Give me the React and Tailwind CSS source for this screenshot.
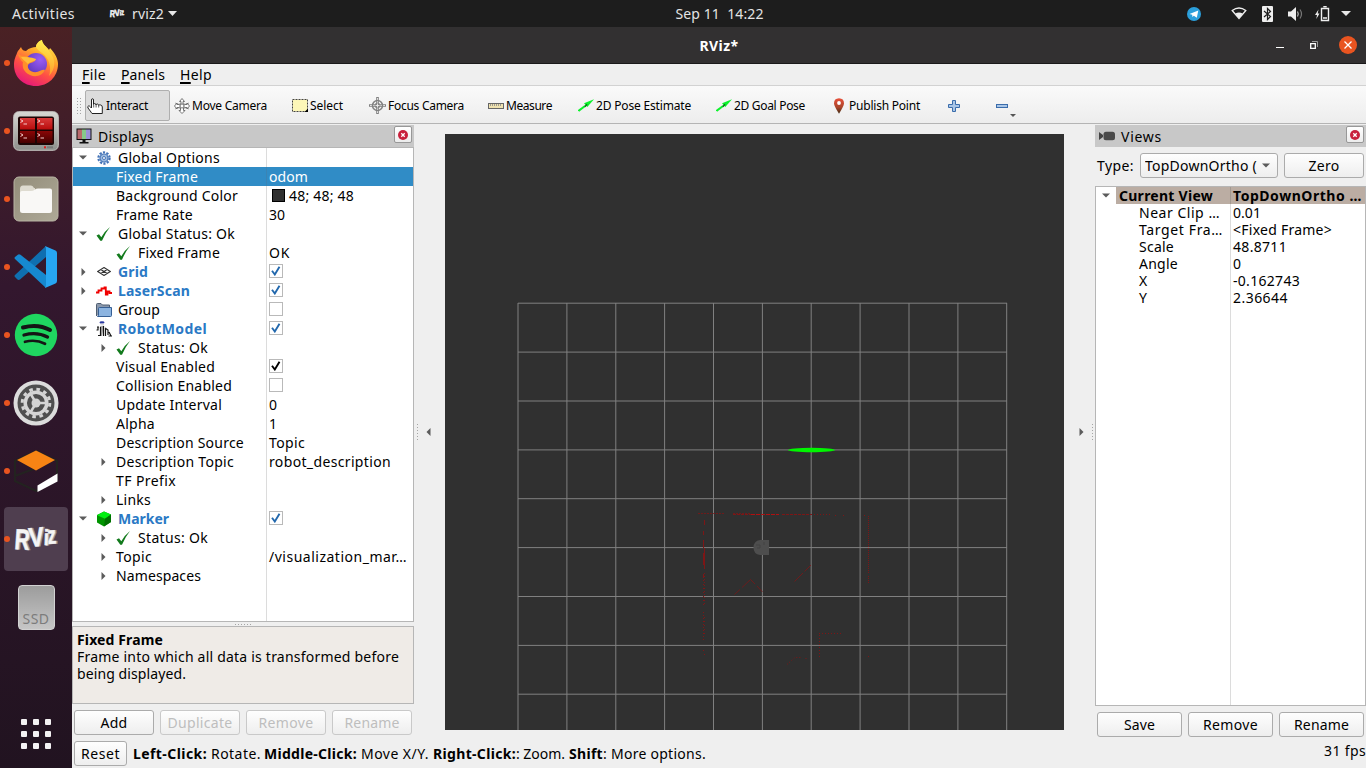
import React, { useLayoutEffect, useRef } from "react";

/* Text run spread by letter spacing over a fixed width. */
function Label({ w, className = "", children }) {
  const ref = useRef(null);
  useLayoutEffect(() => {
    const el = ref.current;
    el.style.letterSpacing = "0px";
    el.style.width = "auto";
    const natural = el.getBoundingClientRect().width;
    const n = el.textContent.length;
    el.style.letterSpacing = `${(w - natural) / n}px`;
    el.style.width = `${w}px`;
  }, [w, children]);
  return (
    <span ref={ref} className={"inline-block shrink-0 whitespace-pre " + className}>
      {children}
    </span>
  );
}

/* ---------- dock icons ---------- */
const Firefox = () => (
  <svg width="46" height="48" viewBox="0 0 46 48">
    <defs>
      <linearGradient id="ffa" x1="0.8" y1="0" x2="0.3" y2="1">
        <stop offset="0" stopColor="#fff44f" />
        <stop offset="0.35" stopColor="#ffa52a" />
        <stop offset="0.65" stopColor="#ff4f45" />
        <stop offset="1" stopColor="#e5177b" />
      </linearGradient>
      <linearGradient id="ffb" x1="0.5" y1="0" x2="0.4" y2="1">
        <stop offset="0" stopColor="#fff150" />
        <stop offset="1" stopColor="#ff9a2a" />
      </linearGradient>
      <radialGradient id="ffc" cx="0.7" cy="0.3" r="0.8">
        <stop offset="0" stopColor="#9a5cf5" />
        <stop offset="1" stopColor="#5a35b8" />
      </radialGradient>
    </defs>
    <path d="M8 8 C9 11 11 12 13 12 C16 9 20 8 23 8 C23 5 26 2 29 1 C29 5 34 8 36 11 C36 10 37 10 37 9 C42 14 45 20 45 25 C45 38 35 47 23 47 C10 47 1 38 1 26 C1 20 3 17 4 14 C5 11 7 10 8 8Z" fill="url(#ffa)" />
    <path d="M23 8 C23 5 26 2 29 1 C29 5 34 8 36 12 C44 21 42 31 36 37 C39 28 36 19 29 14 C26 12 24 10 23 8Z" fill="url(#ffb)" />
    <circle cx="23" cy="25" r="11" fill="url(#ffc)" />
    <path d="M5 15 C8 17 11 17 13 17 C15 18 19 21 23 20 C22 24 17 23 15 26 C14 30 18 34 24 33 C28 32 29 30 32 31 C30 36 23 39 17 36 C10 33 9 27 10 23 C8 22 6 18 5 15Z" fill="#ff8f2b" />
    <path d="M8 18 C12 18 18 18 23 20 C22 23 17 22 15 25 C12 22 10 21 8 18Z" fill="#ffbd3a" />
  </svg>
);

const Terminator = () => (
  <svg width="46" height="40" viewBox="0 0 46 40">
    <defs>
      <linearGradient id="tma" x1="0" y1="0" x2="0" y2="1">
        <stop offset="0" stopColor="#d8d8d4" />
        <stop offset="1" stopColor="#8d8f8b" />
      </linearGradient>
      <linearGradient id="tmb" x1="0" y1="0" x2="0" y2="1">
        <stop offset="0" stopColor="#d83a3a" />
        <stop offset="1" stopColor="#b80c0c" />
      </linearGradient>
      <linearGradient id="tmc" x1="0" y1="0" x2="0" y2="1">
        <stop offset="0" stopColor="#8a0606" />
        <stop offset="1" stopColor="#460000" />
      </linearGradient>
    </defs>
    <rect x="0.7" y="0.7" width="44.6" height="38.6" rx="5" fill="url(#tma)" stroke="#c6c6c2" />
    <rect x="5" y="5.500" width="36" height="28.500" rx="2" fill="#1d0505" />
    <rect x="7" y="7" width="15" height="11.500" fill="url(#tmb)" />
    <rect x="24" y="7" width="15.500" height="11.500" fill="url(#tmb)" />
    <rect x="7" y="20" width="15" height="12" fill="url(#tmc)" />
    <rect x="24" y="20" width="15.500" height="12" fill="url(#tmc)" />
    <g fill="none" stroke="#f4caca" strokeWidth="1">
      <path d="M7.500 8.500l2.500 1.500l-2.500 1.500M10.500 13h3.500M24.500 8.500l2.500 1.500l-2.500 1.500M27.500 13h3.500M7.500 22.500l2.500 1.500l-2.500 1.500M10.500 27h3.500M24.500 22.500l2.500 1.500l-2.500 1.500M27.500 27h3.500" />
    </g>
    <rect x="31" y="35.300" width="2" height="2" fill="#e01b1b" />
    <rect x="34" y="35.300" width="6" height="2" fill="#777" />
  </svg>
);

const Files = () => (
  <svg width="46" height="46" viewBox="0 0 46 46">
    <defs>
      <linearGradient id="fla" x1="0" y1="0" x2="1" y2="1">
        <stop offset="0" stopColor="#938d7a" />
        <stop offset="1" stopColor="#aea997" />
      </linearGradient>
    </defs>
    <rect x="1" y="1" width="44" height="44" rx="5" fill="url(#fla)" stroke="#b9b4a4" />
    <path d="M7 13 q0 -3.500 3 -3.500 h8 q2 0 3 2.500 h1 v6 h-15z" fill="#dedbd0" />
    <path d="M7 17 q0 -2 2 -2 h9 q2 0 4 -1.500 q1 -1 3 -1 h12 q2 0 2 2 v20 q0 2.500 -2.500 2.500 h-27 q-2.500 0 -2.500 -2.500z" fill="#f9f8f6" />
  </svg>
);

const VSCode = () => (
  <svg width="44" height="44" viewBox="0 0 44 44">
    <path d="M1 30 L32 1 V12 L6 34.500 Q4.500 35.500 3.200 34.300 L1 32 Q0 31 1 30Z" fill="#0f6fb0" />
    <path d="M1 14 Q0 13 1 12 L3.800 9.700 Q5 8.800 6.500 9.800 L32 30 V43Z" fill="#1689d0" />
    <path d="M31 1 L41.500 5.500 Q43 6.200 43 8 V36 Q43 37.800 41.500 38.500 L31 43 Q32 42 32 40 V4 Q32 2 31 1Z" fill="#27a6f2" />
  </svg>
);

const Spotify = () => (
  <svg width="44" height="44" viewBox="0 0 44 44">
    <circle cx="22" cy="22" r="21.200" fill="#1fd660" />
    <g fill="none" stroke="#151515" strokeLinecap="round">
      <path d="M9 14.500 Q24 10.500 36 17" strokeWidth="4" />
      <path d="M10 22 Q23 18.500 33.500 24" strokeWidth="3.300" />
      <path d="M11 28.800 Q22 26 31 30.800" strokeWidth="2.700" />
    </g>
  </svg>
);

const Settings = () => (
  <svg width="46" height="46" viewBox="0 0 46 46">
    <circle cx="23" cy="23" r="20.500" fill="#4f4f4f" stroke="#dcdcdc" strokeWidth="4" />
    <circle cx="23" cy="23" r="13.800" fill="none" stroke="#d4d4d4" strokeWidth="3" strokeDasharray="3.600 3.624" />
    <circle cx="23" cy="23" r="10.800" fill="none" stroke="#d4d4d4" strokeWidth="3.500" />
    <circle cx="23" cy="23" r="4.500" fill="#d4d4d4" />
    <path d="M23 23 L33 23 M23 23 L18 31.500 M23 23 L18 14.500" stroke="#d4d4d4" strokeWidth="2.500" />
  </svg>
);

const Gazebo = () => (
  <svg width="48" height="46" viewBox="0 0 48 46">
    <path d="M24 3 L45 13 V32 L24 43 L3 33 V13Z M3 28 L24 20" fill="none" stroke="#232320" strokeWidth="2" />
    <path d="M24 2.500 L43 12 L24 22.500 L5 12Z" fill="#f78414" />
    <path d="M45.500 25.500 V33.500 L25.500 44 V37.500Z" fill="#fff" />
  </svg>
);

const RVizLogo = ({ small }) => (
  <svg className="overflow-visible" width={small ? 16 : 46} height={small ? 11 : 32} viewBox="0 0 46 32">
    {[["#9b9b9b", 1.4], ["#f5f5f5", 0]].map(([c, d]) => (
      <g key={c} fill={c} stroke={c} strokeWidth="0.6" fontFamily="Liberation Sans" fontWeight="700">
        <text transform={`translate(${1 + d} 26) rotate(4) scale(0.72 1)`} fontSize="29">R</text>
        <text transform={`translate(${16.500 + d} 24) rotate(-5) scale(0.84 1)`} fontSize="27">V</text>
        <text transform={`translate(${30.500 + d} 22) rotate(2) scale(0.85 1)`} fontSize="22">i</text>
        <text transform={`translate(${35 + d} 21) rotate(-4) scale(0.68 1)`} fontSize="25">z</text>
      </g>
    ))}
  </svg>
);

const SSD = () => (
  <div className="flex h-[45px] w-[37px] items-end justify-center rounded-[4px] border border-[#d2d2d2] bg-linear-to-b from-[#9c9c9c] to-[#c6c6c6]">
    <Label w={27} className="text-[14px] leading-[21px] text-[#7c7c7c]">SSD</Label>
  </div>
);

const dock = [
  { i: <Firefox />, dot: true },
  { i: <Terminator />, dot: true },
  { i: <Files />, dot: true },
  { i: <VSCode />, dot: true },
  { i: <Spotify />, dot: true },
  { i: <Settings />, dot: true },
  { i: <Gazebo />, dot: true },
  { i: <RVizLogo />, dot: true, active: true },
  { i: <SSD /> },
];

function Dock() {
  return (
    <aside className="flex w-[72px] shrink-0 flex-col justify-between bg-linear-to-b from-[#4a2124] via-[#33172e] via-35% to-[#211320] pt-[2px]">
      <div>
        {dock.map((d, k) => (
          <div key={k} className="flex h-[68px] items-center">
            <div className={"relative ml-1 flex h-16 w-16 items-center justify-center rounded-[4px] " + (d.active ? "bg-[#4f3e4f]" : "")}>
              {d.i}
              {d.dot && <span className="absolute top-[29px] left-0 h-[6px] w-[6px] rounded-full bg-[#e95420]" />}
            </div>
          </div>
        ))}
      </div>
      <div className="mb-[19px] ml-[21px] grid w-[30px] grid-cols-3 gap-[6px]">
        {Array.from({ length: 9 }, (_, k) => (
          <span key={k} className="h-[6px] w-[6px] rounded-[1px] bg-[#f4f2f3]" />
        ))}
      </div>
    </aside>
  );
}

/* ---------- top bar ---------- */
function TopBar() {
  return (
    <header className="grid h-[27px] shrink-0 grid-cols-3 items-center bg-[#1d1d1d] text-[14px] text-[#e4e4e4]">
      <div className="flex items-center pl-3">
        <Label w={63}>Activities</Label>
        <span className="ml-[34px] flex"><RVizLogo small /></span>
        <Label w={32} className="ml-[7px]">rviz2</Label>
        <svg className="ml-[4px]" width="9" height="5"><path d="M0 0H9L4.500 5Z" fill="#e8e8e8" /></svg>
      </div>
      <div className="flex justify-center pl-[73px]">
        <Label w={88}>{"Sep 11  14:22"}</Label>
      </div>
      <div className="flex items-center justify-end pr-[15px]">
        <svg width="14" height="14" viewBox="0 0 14 14"><circle cx="7" cy="7" r="7" fill="#2b9fdb" /><path d="M2.500 7 L11.300 3.500 L9.800 10.800 L6.800 8.700 L5.400 10 L5.200 7.800Z" fill="#fff" /></svg>
        <svg className="ml-[30px]" width="16" height="13" viewBox="0 0 16 13"><path d="M1.200 3.500 Q8 -1.500 14.800 3.500 L8 11.500Z" fill="none" stroke="#eee" strokeWidth="1.300" /><path d="M4.300 6.500 Q8 4.300 11.700 6.500 L8 11.500Z" fill="#eee" /></svg>
        <svg className="ml-[15px]" width="11" height="16" viewBox="0 0 11 16"><rect width="11" height="16" rx="1" fill="#eee" /><path d="M2 5 L8.500 10.500 L5.500 13.500 V2.500 L8.500 5.500 L2 11" fill="none" stroke="#1d1d1d" strokeWidth="1.200" /></svg>
        <svg className="ml-[15px]" width="15" height="14" viewBox="0 0 15 14"><path d="M0 4.500H3L8 0V14L3 9.500H0Z" fill="#eee" /><path d="M9.500 4.500Q11 7 9.500 9.500" fill="none" stroke="#bbb" strokeWidth="1.200" /><path d="M12 2.500Q15 7 12 11.500" fill="none" stroke="#777" strokeWidth="1.200" /></svg>
        <svg className="ml-[12px]" width="15" height="16" viewBox="0 0 15 16"><path d="M3.500 3.500L0 9H2L1.300 13L4.500 7.500H2.700Z" fill="#eee" /><path d="M6.500 2.500H13.500V14.500H6.500Z" fill="none" stroke="#eee" strokeWidth="1.400" /><path d="M8.300 0.700H11.700M8 12H12" stroke="#eee" strokeWidth="1.600" /></svg>
        <svg className="ml-[11px]" width="10" height="5"><path d="M0 0H10L5 5Z" fill="#e8e8e8" /></svg>
      </div>
    </header>
  );
}

function TitleBar() {
  return (
    <div className="grid h-[37px] shrink-0 grid-cols-3 items-center border-b border-[#1a191a] bg-[#323031]">
      <span />
      <div className="flex justify-center">
        <Label w={39} className="text-[14px] font-bold text-white">RViz*</Label>
      </div>
      <div className="flex items-center justify-end pr-[9px]">
        <span className="mt-[5px] h-px w-2 bg-white" />
        <svg className="ml-[26px]" width="8" height="8" viewBox="0 0 8 8"><path d="M0.700 2.700H5.300V7.300H0.700Z" fill="none" stroke="#fff" strokeWidth="1.300" /><path d="M2 0.500H7.500V6" fill="none" stroke="#999" /></svg>
        <span className="ml-[21px] flex h-[18px] w-[18px] items-center justify-center rounded-full bg-[#e95420]">
          <svg width="8" height="8"><path d="M0.500 0.500L7.500 7.500M7.500 0.500L0.500 7.500" stroke="#fff" strokeWidth="1.300" /></svg>
        </span>
      </div>
    </div>
  );
}

function MenuItem({ w, first, rest }) {
  return (
    <Label w={w} className="leading-[19px]">
      <span className="underline decoration-[1.5px] underline-offset-2">{first}</span>
      {rest}
    </Label>
  );
}

/* ---------- toolbar ---------- */
const Hand = () => (
  <svg className="-ml-px mr-px" width="16" height="16" viewBox="0 0 16 16"><path d="M4.500 10V2Q4.500 0.700 5.500 0.700Q6.500 0.700 6.500 2V6.500Q6.500 5.600 7.800 5.600Q9 5.600 9 7Q9.200 6 10.500 6Q11.600 6.200 11.600 7.500Q12 6.700 13.300 6.900Q15.300 7.200 15.300 9V15.500H5Q4.500 15 4 14L1 10Q0.300 8.300 1.500 8Q2.500 7.700 3.500 9Z" fill="#fff" stroke="#222" strokeWidth="1" /><path d="M6.700 7V9.500M9.100 7V9.500M11.700 7.500V9.500" stroke="#333" strokeWidth="0.800" /></svg>
);
const Move = () => (
  <svg width="16" height="16" viewBox="0 0 16 16" fill="#fff" stroke="#666" strokeWidth="0.900"><path d="M8 0.500L10.500 3.500H9V6L13 6.500V5L15.500 8L13 11V9.500L9.500 10V12.500H11L8 15.500L5 12.500H6.500V10L3 9.500V11L0.500 8L3 5V6.500L7 6V3.500H5.500Z" /><path d="M1 5L15 11M1 11L15 5" strokeWidth="0.600" /><circle cx="8" cy="8" r="2" /></svg>
);
const SelectIcon = () => (
  <svg width="16" height="13" viewBox="0 0 16 13"><rect x="0.500" y="0.500" width="15" height="12" fill="#fdf7b8" stroke="#444" strokeDasharray="2 1" /><path d="M16 9.500V13H12.500Z" fill="#000" /></svg>
);
const Focus = () => (
  <svg className="-ml-px" width="17" height="17" viewBox="0 0 17 17" fill="none" stroke="#808080"><path d="M8.500 0V17M0 8.500H17" strokeWidth="2.600" /><path d="M8.500 1V16M1 8.500H16" stroke="#eee" strokeWidth="0.900" /><circle cx="8.500" cy="8.500" r="5" strokeWidth="1.500" /><circle cx="8.500" cy="8.500" r="2.500" /></svg>
);
const Ruler = () => (
  <svg width="16" height="6" viewBox="0 0 16 6"><rect x="0.500" y="0.500" width="15" height="5" fill="#efe2b0" stroke="#666" /><path d="M2.500 1V3M4.500 1V3M6.500 1V3M8.500 1V3M10.500 1V3M12.500 1V3" stroke="#888" strokeWidth="0.800" /></svg>
);
const GreenArrow = () => (
  <svg width="16" height="13" viewBox="0 0 16 13"><path d="M0.500 12L7 7" stroke="#0cf22c" strokeWidth="2" /><path d="M16 0.300L6 4.300L9.300 8Z" fill="#0cf22c" /><path d="M6.800 7.800L9 5.200" stroke="#067a17" strokeWidth="1.500" /></svg>
);
const Pin = () => (
  <svg width="16" height="16" viewBox="0 0 16 16"><defs><linearGradient id="pin" x1="0" y1="0" x2="0" y2="1"><stop offset="0" stopColor="#e8503a" /><stop offset="0.600" stopColor="#a8452a" /><stop offset="1" stopColor="#3e2a12" /></linearGradient></defs><path d="M8 0.300Q13 0.500 13 5.300Q13 8 8 15.700Q3 8 3 5.300Q3 0.500 8 0.300Z" fill="url(#pin)" /><circle cx="8" cy="5" r="1.900" fill="#fff" /></svg>
);

const tools = [
  { t: "Move Camera", w: 75, i: <Move />, m: "ml-[4px]" },
  { t: "Select", w: 33, i: <SelectIcon />, m: "ml-[25px]" },
  { t: "Focus Camera", w: 76, i: <Focus />, m: "ml-[27px]" },
  { t: "Measure", w: 46, i: <Ruler />, m: "ml-[24px]" },
  { t: "2D Pose Estimate", w: 95, i: <GreenArrow />, m: "ml-[26px]" },
  { t: "2D Goal Pose", w: 71, i: <GreenArrow />, m: "ml-[25px]" },
  { t: "Publish Point", w: 71, i: <Pin />, m: "ml-[26px]" },
];

const Dots = ({ n, className = "" }) => (
  <span className={"flex flex-col gap-[2px] " + className}>
    {Array.from({ length: n }, (_, k) => <span key={k} className="h-px w-px bg-[#a5a5a5]" />)}
  </span>
);

function Toolbar() {
  return (
    <div className="flex h-[38px] shrink-0 items-center border-b border-[#b4b4b4] bg-linear-to-b from-[#fafafa] to-[#ededed] pt-[2px] text-[12px] text-black">
      <Dots n={6} className="ml-[5px]" />
      <Dots n={6} className="ml-[2px]" />
      <div className="ml-1 flex h-[31px] w-[85px] items-center gap-[2px] rounded-[2px] border border-[#afafaf] bg-[#dcdcdc] pl-[2px]">
        <Hand />
        <Label w={42}>Interact</Label>
      </div>
      {tools.map((x) => (
        <div key={x.t} className={"flex items-center gap-[2px] " + x.m}>
          {x.i}
          <Label w={x.w}>{x.t}</Label>
        </div>
      ))}
      <svg className="ml-[28px]" width="12" height="12"><path d="M4.500 0.500H7.500V4.500H11.500V7.500H7.500V11.500H4.500V7.500H0.500V4.500H4.500Z" fill="#a9c5e6" stroke="#3a6cab" /></svg>
      <svg className="ml-[36px]" width="12" height="4"><rect x="0.500" y="0.500" width="11" height="3" fill="#a9c5e6" stroke="#3a6cab" /></svg>
      <svg className="mt-[20px] ml-[2px]" width="6" height="3"><path d="M0 0H6L3 3Z" fill="#555" /></svg>
    </div>
  );
}

/* ---------- tree pieces ---------- */
const Down = () => <svg width="8" height="5"><path d="M0 0.500H8L4 4.500Z" fill="#5b5b5b" /></svg>;
const Right = () => <svg width="5" height="8"><path d="M0.500 0V8L4.500 4Z" fill="#5b5b5b" /></svg>;
const Ok = () => (
  <svg className="-ml-px" width="15" height="14" viewBox="0 0 15 14"><path d="M0.500 8.500L3 7.300L5.300 10.300Q8.500 4.300 14 0Q9.500 5.500 6 13.800H4.300Z" fill="#127a1c" /></svg>
);
const Gear = () => (
  <svg className="-ml-px" width="14" height="14" viewBox="0 0 14 14" fill="none"><circle cx="7" cy="7" r="5.600" stroke="#4474b8" strokeWidth="2.200" strokeDasharray="2.200 1.318" /><circle cx="7" cy="7" r="4" fill="#9dbbe0" stroke="#4a78b8" strokeWidth="1.200" /><circle cx="7" cy="7" r="1.500" fill="#fff" stroke="#4a78b8" /></svg>
);
const GridIcon = () => (
  <svg width="14" height="9" viewBox="0 0 14 9"><path d="M7 0.500L13.300 4.500L7 8.500L0.700 4.500ZM3.800 2.500L10.200 6.500M10.200 2.500L3.800 6.500" fill="none" stroke="#333" strokeWidth="1.100" /></svg>
);
const Laser = () => (
  <svg width="16" height="10" viewBox="0 0 16 10"><path d="M0 6.500H2.500V4.500H5.500V2.500H8.500V1.500H9.800V8.500H11.500V5.500H13.500V7H16" fill="none" stroke="#f00000" strokeWidth="1.800" /></svg>
);
const Folder = () => (
  <svg width="16" height="14" viewBox="0 0 16 14"><path d="M0.500 13V1.500Q0.500 0.500 1.500 0.500H5L6.500 2H13.500V5" fill="#8a98ac" stroke="#4f5d70" /><path d="M2.500 5.500Q2.500 4.500 3.500 4.500H15.500V12.500Q15.500 13.500 14.500 13.500H1.500Q2.500 13 2.500 12Z" fill="#8cb4e0" stroke="#365f94" /></svg>
);
const Robot = () => (
  <svg width="16" height="16" viewBox="0 0 16 16"><ellipse cx="6" cy="1.500" rx="2.500" ry="1.300" fill="#2836a0" /><path d="M4.500 2.500H8V4.500H4.500Z" fill="#ddd" /><path d="M4 5H8V15H7L6.500 10L6 15H4Z" fill="#aaa" /><path d="M1 6H3M2 6V9M0.500 9H2.500M4.500 6V15M2 14.500H4M7.500 5V15M9.500 8V15M9 7L12 9V14M13 11L15 15M12.500 15H16" fill="none" stroke="#151515" strokeWidth="1.200" /></svg>
);
const Cube = () => (
  <svg width="14" height="16" viewBox="0 0 14 16"><path d="M7 0.500L14 3.500V11L7 15.500L0 11.500V4Z" fill="#009400" /><path d="M7 0.500L14 3.500L8 7.800L0 4.300Z" fill="#00f010" /><path d="M8 7.800L14 3.500V11L7 15.500Z" fill="#007000" /></svg>
);

function Check({ on, color = "#2268ad" }) {
  return (
    <span className="mb-[2px] flex h-[14px] w-[14px] items-center justify-center border border-[#b9b9b9] bg-white">
      {on && (
        <svg width="10" height="10" viewBox="0 0 10 10"><path d="M1 4.800L3.800 8.500L8.500 0.800" fill="none" stroke={color} strokeWidth="1.900" /></svg>
      )}
    </span>
  );
}

const rows = [
  { l: 0, a: "d", i: <Gear />, t: "Global Options", w: 102 },
  { l: 1, t: "Fixed Frame", w: 82, v: "odom", vw: 39, sel: true },
  { l: 1, t: "Background Color", w: 122, v: "48; 48; 48", vw: 65, sw: true },
  { l: 1, t: "Frame Rate", w: 77, v: "30", vw: 16 },
  { l: 0, a: "d", i: <Ok />, t: "Global Status: Ok", w: 117 },
  { l: 1, i: <Ok />, t: "Fixed Frame", w: 82, v: "OK", vw: 21 },
  { l: 0, a: "r", i: <GridIcon />, t: "Grid", w: 30, b: true, c: "on" },
  { l: 0, a: "r", i: <Laser />, t: "LaserScan", w: 72, b: true, c: "on" },
  { l: 0, i: <Folder />, t: "Group", w: 42, c: "off" },
  { l: 0, a: "d", i: <Robot />, t: "RobotModel", w: 89, b: true, c: "on" },
  { l: 1, a: "r", i: <Ok />, t: "Status: Ok", w: 70 },
  { l: 1, t: "Visual Enabled", w: 99, c: "black" },
  { l: 1, t: "Collision Enabled", w: 116, c: "off" },
  { l: 1, t: "Update Interval", w: 106, v: "0", vw: 8 },
  { l: 1, t: "Alpha", w: 39, v: "1", vw: 8 },
  { l: 1, t: "Description Source", w: 128, v: "Topic", vw: 36 },
  { l: 1, a: "r", t: "Description Topic", w: 118, v: "robot_description", vw: 122 },
  { l: 1, t: "TF Prefix", w: 60 },
  { l: 1, a: "r", t: "Links", w: 35 },
  { l: 0, a: "d", i: <Cube />, t: "Marker", w: 51, b: true, c: "on" },
  { l: 1, a: "r", i: <Ok />, t: "Status: Ok", w: 70 },
  { l: 1, a: "r", t: "Topic", w: 36, v: "/visualization_mar…", vw: 138 },
  { l: 1, a: "r", t: "Namespaces", w: 85 },
];

function TreeRow({ r }) {
  return (
    <div className={"flex h-[19px] shrink-0 leading-[19px] " + (r.sel ? "bg-[#308cc6] text-white" : "text-black")}>
      <div className={"flex w-[194px] shrink-0 items-center border-r " + (r.sel ? "border-[#3a84b4] " : "border-[#dcdcdc] ") + (r.l ? "pl-5" : "")}>
        <span className="flex w-[23px] shrink-0 items-center justify-center pr-[3px]">
          {r.a === "d" && <Down />}
          {r.a === "r" && <Right />}
        </span>
        {r.i && <span className="mr-[6px] flex w-4 shrink-0 items-center justify-center">{r.i}</span>}
        <Label w={r.w} className={r.b ? "font-bold text-[#2a79c5]" : ""}>{r.t}</Label>
      </div>
      <div className="flex items-center pl-[2px]">
        {r.sw && <span className="mr-[4px] ml-[3px] h-[13px] w-[13px] border border-black bg-[#303030]" />}
        {r.c && <Check on={r.c !== "off"} color={r.c === "black" ? "#000" : "#2268ad"} />}
        {r.v && <Label w={r.vw}>{r.v}</Label>}
      </div>
    </div>
  );
}

function CloseButton() {
  return (
    <span className="mb-[3px] flex h-[17px] w-[18px] items-center justify-center rounded-[2px] border border-[#989898] bg-linear-to-b from-white to-[#ececec]">
      <svg width="10" height="10"><circle cx="5" cy="5" r="5" fill="#c8203c" /><path d="M3.300 3.300L6.700 6.700M6.700 3.300L3.300 6.700" stroke="#fff" strokeWidth="1.300" /></svg>
    </span>
  );
}

function Button({ w, className, disabled, children }) {
  return (
    <button className={"flex h-[25px] items-center justify-center rounded-[3px] border bg-linear-to-b from-[#fefefe] to-[#eeeeee] " + (disabled ? "border-[#c9c9c9] text-[#bebebe] " : "border-[#ababab] text-black ") + className}>
      <Label w={w}>{children}</Label>
    </button>
  );
}

function DisplaysPanel() {
  return (
    <section className="flex w-[342px] shrink-0 flex-col pt-px">
      <div className="flex h-[22px] shrink-0 items-center justify-between bg-[#c8c8c8] pr-[2px] pl-1">
        <div className="flex items-center">
          <svg width="16" height="16" viewBox="0 0 16 16"><rect x="0.500" y="0.500" width="15" height="11.500" fill="#111" /><rect x="1.500" y="1.500" width="4.500" height="9.500" fill="#b96a6d" /><rect x="6" y="1.500" width="4" height="9.500" fill="#87c98a" /><rect x="10" y="1.500" width="4.500" height="9.500" fill="#9b90d8" /><path d="M6.500 12H9.500V14H12.500V15.500H3.500V14H6.500Z" fill="#111" /></svg>
          <Label w={56} className="ml-[6px]">Displays</Label>
        </div>
        <CloseButton />
      </div>
      <div className="flex h-[475px] shrink-0 flex-col border border-[#b6b6b6] bg-white">
        {rows.map((r, k) => <TreeRow key={k} r={r} />)}
        <div className="w-[194px] grow border-r border-[#dcdcdc]" />
      </div>
      <div className="flex h-1 shrink-0 items-center justify-center gap-[2px]">
        {Array.from({ length: 6 }, (_, k) => <span key={k} className="h-px w-px bg-[#a5a5a5]" />)}
      </div>
      <div className="flex h-[78px] shrink-0 flex-col items-start border border-[#b6b6b6] bg-[#efebe7] pt-[4px] pl-[4px] leading-[17px]">
        <Label w={86} className="font-bold">Fixed Frame</Label>
        <Label w={322}>Frame into which all data is transformed before</Label>
        <Label w={109}>being displayed.</Label>
      </div>
      <div className="mt-[6px] flex gap-[6px] pl-[2px]">
        <Button w={27} className="w-20">Add</Button>
        <Button w={65} className="w-20" disabled>Duplicate</Button>
        <Button w={55} className="w-20" disabled>Remove</Button>
        <Button w={55} className="w-20" disabled>Rename</Button>
      </div>
    </section>
  );
}

/* ---------- 3D viewport ---------- */
const gx = [518, 566.9, 615.8, 664.6, 713.5, 762.4, 811.2, 860.1, 909, 957.9, 1006.7];
const gy = [303.2, 352.1, 401, 449.9, 498.7, 547.6, 596.5, 645.4, 694.2];

function Viewport() {
  return (
    <svg className="mt-[10px] shrink-0 bg-[#303030]" width="619" height="596" viewBox="445 134 619 596">
      <g stroke="#808080" strokeWidth="1">
        {gx.map((x) => <path key={x} d={`M${x} 303V730`} />)}
        {gy.map((y) => <path key={y} d={`M518 ${y}H1007`} />)}
      </g>
      <ellipse cx="811.500" cy="450" rx="23.500" ry="2.200" fill="#00f500" />
      <path d="M769 540H760Q753.500 541 753.500 547.500Q753.500 554 760 555H769Z" fill="#4e4e4e" />
      <path d="M756 545h4v3h-3M764 542v3" fill="none" stroke="#434343" />
      <g fill="none" stroke="#7d1616" strokeWidth="1">
        <path d="M698 513.500H725" strokeDasharray="2 1" strokeOpacity="0.800" />
        <path d="M733 513.500H750" strokeDasharray="2 1" strokeOpacity="0.800" />
        <path d="M733 514.500H751" strokeDasharray="3 1" />
        <path d="M751 514.500H779" stroke="#b01010" strokeDasharray="4 1" />
        <path d="M782 514.500H812" strokeDasharray="3 1" />
        <path d="M814 514.500H832" strokeDasharray="1 2" />
        <path d="M835 515.500H836M843 515.500H844M864 515.500H865" />
        <path d="M868.500 516V574M868.500 576V583" strokeDasharray="1 1" />
        <path d="M704.500 520V525M703.500 531V535M703.500 540V548M704.500 548V569M703.500 553V565M703.500 574V578" />
        <path d="M704.500 573V606" strokeDasharray="1 2" />
        <path d="M703.500 580V605" strokeDasharray="1 3" />
        <path d="M703.500 612V640" strokeDasharray="1 2" />
        <path d="M704.500 617V634" strokeDasharray="1 3" />
        <path d="M703.500 650V651M704.500 654V655M868 656.500H869" />
        <path d="M734.500 594.500L740 589.500M742 587.500L750.500 579.500L755 584M757 586L762.500 592" strokeOpacity="0.750" />
        <path d="M794.500 581.500L803 573M804.500 571.500L811 565" strokeOpacity="0.800" />
        <path d="M819.500 657V633.500" strokeDasharray="1 2" />
        <path d="M819 633.500H843" strokeDasharray="1 2" />
        <path d="M787 664.500L795 657.500H802M806 658V661" strokeDasharray="1 2" />
      </g>
    </svg>
  );
}

/* ---------- views ---------- */
const views = [
  ["Near Clip …", 81, "0.01", 28],
  ["Target Fra…", 84, "<Fixed Frame>", 99],
  ["Scale", 35, "48.8711", 54],
  ["Angle", 39, "0", 8],
  ["X", 9, "-0.162743", 67],
  ["Y", 9, "2.36644", 55],
];

function ViewsPanel() {
  return (
    <section className="flex w-[271px] shrink-0 flex-col pt-px">
      <div className="flex h-[22px] shrink-0 items-center justify-between bg-[#c8c8c8] pr-[2px] pl-1">
        <div className="flex items-center">
          <svg width="16" height="10" viewBox="0 0 16 10"><path d="M0 1L4 4V6L0 9Z" fill="#444" /><rect x="4.500" y="0.800" width="11.500" height="8.500" rx="2.500" fill="#4a4a4a" /></svg>
          <Label w={41} className="ml-[6px]">Views</Label>
        </div>
        <CloseButton />
      </div>
      <div className="mt-[6px] flex h-[25px] shrink-0 items-center pl-[2px]">
        <Label w={37}>Type:</Label>
        <div className="ml-[6px] flex h-[25px] w-[138px] items-center justify-between rounded-[3px] border border-[#ababab] bg-linear-to-b from-[#fefefe] to-[#eeeeee] pr-[7px] pl-1">
          <span className="flex w-[112px] overflow-hidden"><Label w={112}>TopDownOrtho (</Label></span>
          <Down />
        </div>
        <Button w={31} className="ml-[6px] w-20">Zero</Button>
      </div>
      <div className="mt-[8px] flex h-[520px] shrink-0 flex-col border border-[#b6b6b6] bg-white leading-[17px]">
        <div className="flex h-[17px] shrink-0">
          <span className="flex w-5 items-center justify-center"><Down /></span>
          <div className="flex w-[115px] border-r border-[#a39991] bg-[#bbada3] pl-[3px]">
            <Label w={94} className="font-bold">Current View</Label>
          </div>
          <div className="flex grow bg-[#bbada3] pl-[2px]">
            <Label w={129} className="font-bold">TopDownOrtho …</Label>
          </div>
        </div>
        {views.map(([a, aw, b, bw]) => (
          <div key={a} className="flex h-[17px] shrink-0">
            <div className="w-[135px] border-r border-[#dcdcdc] pl-[43px]"><Label w={aw}>{a}</Label></div>
            <div className="pl-[2px]"><Label w={bw}>{b}</Label></div>
          </div>
        ))}
        <div className="w-[135px] grow border-r border-[#dcdcdc]" />
      </div>
      <div className="mt-[6px] flex gap-[6px] pl-[2px]">
        <Button w={31} className="w-[85px]">Save</Button>
        <Button w={55} className="w-[85px]">Remove</Button>
        <Button w={55} className="w-[85px]">Rename</Button>
      </div>
    </section>
  );
}

function StatusBar() {
  return (
    <div className="flex h-[32px] shrink-0 items-center pt-[3px] pl-[2px]">
      <Button w={39} className="w-[53px]">Reset</Button>
      <Label w={74} className="ml-[6px] font-bold">Left-Click:</Label>
      <Label w={50} className="ml-1">Rotate.</Label>
      <Label w={93} className="ml-[3px] font-bold">Middle-Click:</Label>
      <Label w={68} className="ml-1">Move X/Y.</Label>
      <Label w={83} className="ml-1 font-bold">Right-Click:</Label>
      <Label w={49}>: Zoom.</Label>
      <Label w={34} className="ml-1 font-bold">Shift</Label>
      <Label w={103}>: More options.</Label>
      <Label w={42} className="mb-[6px] ml-auto">31 fps</Label>
    </div>
  );
}

export default function App() {
  return (
    <div className="flex h-[768px] w-[1366px] flex-col overflow-hidden bg-[#efefef] font-['Noto_Sans',sans-serif]">
      <TopBar />
      <div className="flex min-h-0 grow">
        <Dock />
        <div className="flex w-[1294px] flex-col text-[14px] text-black">
          <TitleBar />
          <div className="flex h-[22px] shrink-0 items-center gap-[15px] border-b border-[#d2d2d2] pl-[10px]">
            <MenuItem w={24} first="F" rest="ile" />
            <MenuItem w={44} first="P" rest="anels" />
            <MenuItem w={32} first="H" rest="elp" />
          </div>
          <Toolbar />
          <main className="flex h-[612px] shrink-0">
            <DisplaysPanel />
            <div className="flex w-[31px] shrink-0 items-center gap-[8px] pt-[3px] pl-[3px]">
              <Dots n={6} />
              <svg width="5" height="8"><path d="M4.500 0V8L0.500 4Z" fill="#5b5b5b" /></svg>
            </div>
            <Viewport />
            <div className="flex w-[31px] shrink-0 items-center justify-end gap-[8px] pt-[3px] pr-[2px]">
              <Right />
              <Dots n={6} />
            </div>
            <ViewsPanel />
          </main>
          <StatusBar />
        </div>
      </div>
    </div>
  );
}
